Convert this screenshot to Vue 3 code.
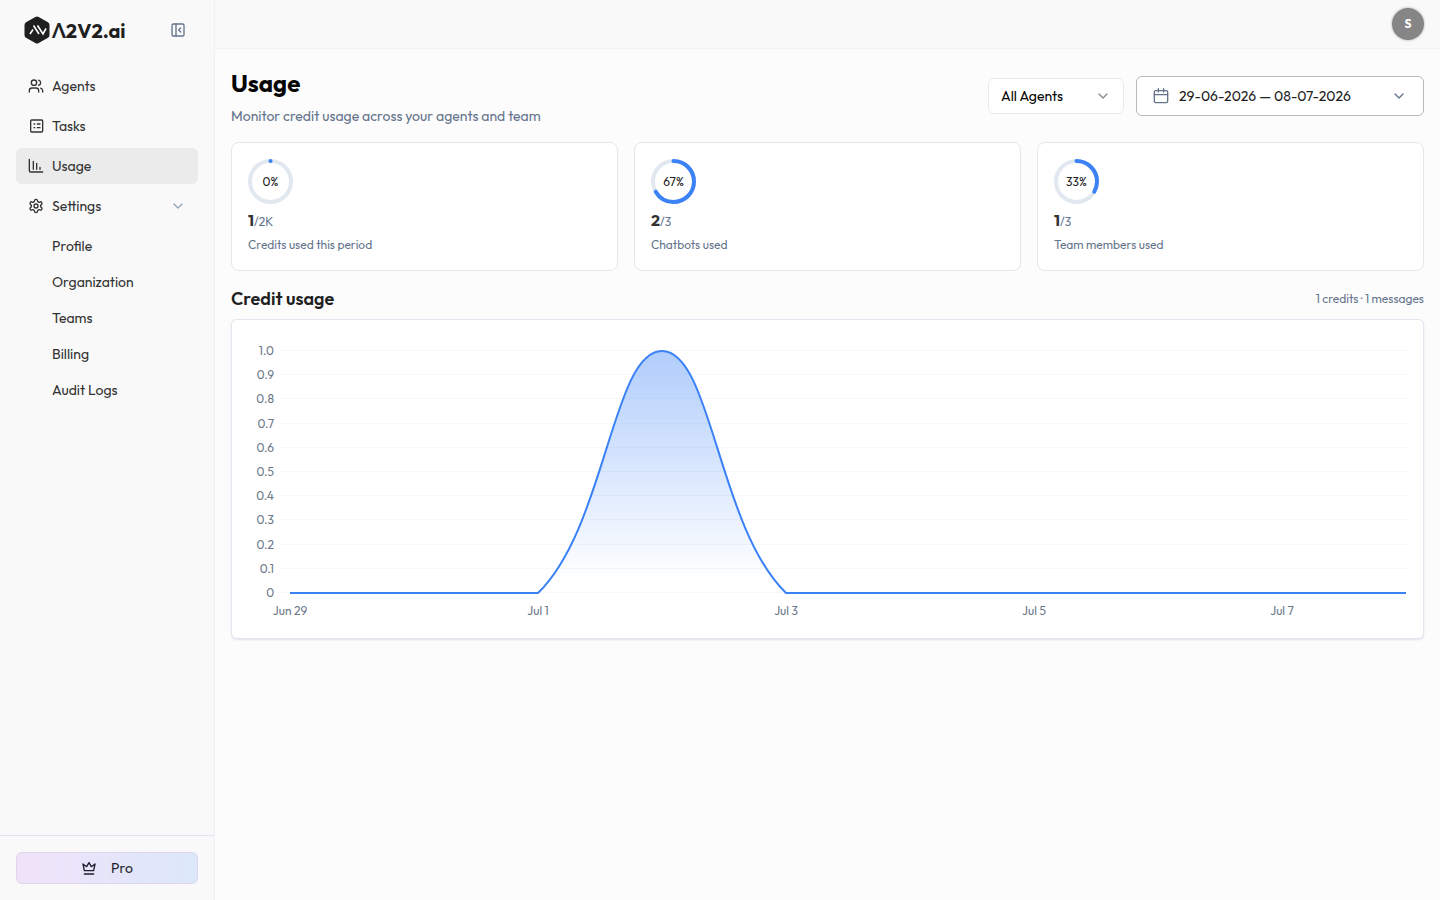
<script setup>
import { computed, onBeforeUnmount, onMounted, ref } from 'vue'

const subItems = ['Profile', 'Organization', 'Teams', 'Billing', 'Audit Logs']

const stats = [
  { percent: 0, arc: 0.05, used: '1', limit: '2K', label: 'Credits used this period' },
  { percent: 67, arc: 66.67, used: '2', limit: '3', label: 'Chatbots used' },
  { percent: 33, arc: 33.33, used: '1', limit: '3', label: 'Team members used' },
]

const values = [0, 0, 0, 1, 0, 0, 0, 0, 0, 0]
const dayLabels = ['Jun 29', '', 'Jul 1', '', 'Jul 3', '', 'Jul 5', '', 'Jul 7', '']

const chartHeight = 286
const plot = { left: 42, right: 1, top: 15, bottom: 257 }
const chartEl = ref(null)
const chartWidth = ref(1159)
let observer

onMounted(() => {
  observer = new ResizeObserver(([entry]) => {
    chartWidth.value = Math.round(entry.contentRect.width)
  })
  observer.observe(chartEl.value)
})
onBeforeUnmount(() => observer.disconnect())

const points = computed(() => {
  const step = (chartWidth.value - plot.right - plot.left) / (values.length - 1)
  return values.map((v, i) => ({
    x: plot.left + step * i,
    y: plot.bottom - v * (plot.bottom - plot.top),
  }))
})

const gridRows = computed(() =>
  Array.from({ length: 11 }, (_, i) => ({
    y: Math.round(plot.top + (i * (plot.bottom - plot.top)) / 10),
    text: i === 10 ? '0' : ((10 - i) / 10).toFixed(1),
  }))
)

/* Cardinal spline with tension 0.4, control points kept inside the plot. */
const linePath = computed(() => {
  const pts = points.value
  const tension = 0.4
  const cap = (y) => Math.min(plot.bottom, Math.max(plot.top, y))
  const controls = pts.map((p, i) => {
    const prev = pts[i - 1] || p
    const next = pts[i + 1] || p
    const before = Math.hypot(p.x - prev.x, p.y - prev.y)
    const after = Math.hypot(next.x - p.x, next.y - p.y)
    const total = before + after || 1
    const a = (tension * before) / total
    const b = (tension * after) / total
    return {
      inX: p.x - a * (next.x - prev.x),
      inY: cap(p.y - a * (next.y - prev.y)),
      outX: p.x + b * (next.x - prev.x),
      outY: cap(p.y + b * (next.y - prev.y)),
    }
  })
  return pts.reduce((d, p, i) => {
    if (i === 0) return `M${p.x} ${p.y}`
    const c = controls[i - 1]
    const e = controls[i]
    return `${d}C${c.outX} ${c.outY} ${e.inX} ${e.inY} ${p.x} ${p.y}`
  }, '')
})

const areaPath = computed(() => {
  const pts = points.value
  return `${linePath.value}L${pts[pts.length - 1].x} ${plot.bottom}L${pts[0].x} ${plot.bottom}Z`
})
</script>

<template>
  <div class="app">
    <aside class="sidebar">
      <div class="brand-row">
        <a href="#" class="brand">
          <svg class="brand-mark" viewBox="0 0 26 28" aria-hidden="true">
            <path d="M11.3 1Q13 0 14.7 1L24 6.200Q25.500 7.100 25.500 9V19Q25.500 20.900 24 21.800L14.700 27Q13 28 11.300 27L2 21.800Q.5 20.900 .5 19V9Q.5 7.100 2 6.200Z" fill="#1f1f1f" />
            <path d="M6 18L9 13.500M9.500 9.500L15 18M13.500 9.500L19 18L22 12.500" fill="none" stroke="#fff" stroke-width="1.600" />
          </svg>
          <span>Λ2V2.ai</span>
        </a>
        <button class="icon-button" aria-label="Collapse sidebar">
          <svg class="icon" viewBox="0 0 24 24"><rect x="3" y="3" width="18" height="18" rx="2" /><path d="M9 3v18M16 15l-3-3 3-3" /></svg>
        </button>
      </div>

      <nav class="nav">
        <a href="#" class="nav-item">
          <svg class="icon" viewBox="0 0 24 24"><path d="M16 21v-2a4 4 0 0 0-4-4H6a4 4 0 0 0-4 4v2" /><circle cx="9" cy="7" r="4" /><path d="M22 21v-2a4 4 0 0 0-3-3.870M16 3.130a4 4 0 0 1 0 7.750" /></svg>
          <span>Agents</span>
        </a>
        <a href="#" class="nav-item">
          <svg class="icon" viewBox="0 0 24 24"><rect x="4" y="3" width="18" height="18" rx="1.500" /><path d="M9 9h1M9 14.500h1M14 9h4M14 14.500h4" /></svg>
          <span>Tasks</span>
        </a>
        <a href="#" class="nav-item active" aria-current="page">
          <svg class="icon" viewBox="0 0 24 24"><path d="M2 2v17a2 2 0 0 0 2 2h18M8 17V5M13 17V8M18 17v-3" /></svg>
          <span>Usage</span>
        </a>
        <button class="nav-item" aria-expanded="true">
          <svg class="icon" viewBox="0 0 24 24"><path d="M12.220 2h-.44a2 2 0 0 0-2 2v.18a2 2 0 0 1-1 1.730l-.43.25a2 2 0 0 1-2 0l-.15-.08a2 2 0 0 0-2.730.730l-.22.380a2 2 0 0 0 .730 2.730l.15.1a2 2 0 0 1 1 1.720v.510a2 2 0 0 1-1 1.740l-.15.090a2 2 0 0 0-.730 2.730l.22.380a2 2 0 0 0 2.730.730l.15-.08a2 2 0 0 1 2 0l.43.25a2 2 0 0 1 1 1.730V20a2 2 0 0 0 2 2h.44a2 2 0 0 0 2-2v-.18a2 2 0 0 1 1-1.730l.43-.25a2 2 0 0 1 2 0l.15.080a2 2 0 0 0 2.730-.730l.22-.390a2 2 0 0 0-.730-2.730l-.15-.08a2 2 0 0 1-1-1.740v-.5a2 2 0 0 1 1-1.740l.15-.09a2 2 0 0 0 .730-2.730l-.22-.380a2 2 0 0 0-2.730-.730l-.15.080a2 2 0 0 1-2 0l-.43-.25a2 2 0 0 1-1-1.730V4a2 2 0 0 0-2-2z" /><circle cx="12" cy="12" r="3" /></svg>
          <span>Settings</span>
          <svg class="icon chevron" viewBox="0 0 24 24"><path d="m6 9 6 6 6-6" /></svg>
        </button>
        <div class="sub-nav">
          <a v-for="item in subItems" :key="item" href="#" class="sub-item">{{ item }}</a>
        </div>
      </nav>

      <div class="plan">
        <button class="plan-button">
          <svg class="icon" viewBox="0 0 24 24"><path d="M12 4l3.500 6L21 6l-2 10H5L3 6l5.500 4zM5 21h14" /></svg>
          <span>Pro</span>
        </button>
      </div>
    </aside>

    <div class="page">
      <header class="topbar">
        <button class="avatar" aria-label="Account">S</button>
      </header>

      <main class="content">
        <div class="heading">
          <div>
            <h1>Usage</h1>
            <p>Monitor credit usage across your agents and team</p>
          </div>
          <div class="controls">
            <div class="select-wrap">
              <select aria-label="Agent">
                <option>All Agents</option>
              </select>
              <svg class="icon select-chevron" viewBox="0 0 24 24"><path d="m6 9 6 6 6-6" /></svg>
            </div>
            <button class="date-range">
              <svg class="icon" viewBox="0 0 24 24"><rect x="2" y="4" width="20" height="18" rx="2" /><path d="M8 1v5M16 1v5M2 10h20" /></svg>
              <span>29-06-2026 — 08-07-2026</span>
              <svg class="icon chevron" viewBox="0 0 24 24"><path d="m6 9 6 6 6-6" /></svg>
            </button>
          </div>
        </div>

        <section class="stats">
          <article v-for="stat in stats" :key="stat.label" class="stat">
            <svg class="ring" viewBox="0 0 45 45">
              <circle class="ring-track" cx="22.500" cy="22.500" r="20.500" />
              <circle
                class="ring-value"
                cx="22.500"
                cy="22.500"
                r="20.500"
                pathLength="100"
                :stroke-dasharray="`${stat.arc} 100`"
                transform="rotate(-90 22.500 22.500)"
              />
              <text x="22.500" y="27" text-anchor="middle">{{ stat.percent }}%</text>
            </svg>
            <div class="stat-value"><strong>{{ stat.used }}</strong>/{{ stat.limit }}</div>
            <div class="stat-label">{{ stat.label }}</div>
          </article>
        </section>

        <section class="usage">
          <div class="usage-head">
            <h2>Credit usage</h2>
            <span>1 credits · 1 messages</span>
          </div>
          <div class="chart-card">
            <div ref="chartEl" class="chart">
              <svg :width="chartWidth" :height="chartHeight" role="img" aria-label="Credit usage by day">
                <defs>
                  <linearGradient id="area-fill" x1="0" y1="0" x2="0" y2="1">
                    <stop offset="0" stop-color="#3b82f6" stop-opacity="0.4" />
                    <stop offset="0.95" stop-color="#3b82f6" stop-opacity="0" />
                  </linearGradient>
                </defs>
                <g v-for="row in gridRows" :key="row.text">
                  <rect class="grid-line" :x="plot.left - 8" :y="row.y - 1" :width="chartWidth - plot.left + 7" height="1" />
                  <text class="tick" :x="plot.left - 16" :y="row.y + 4" text-anchor="end">{{ row.text }}</text>
                </g>
                <path :d="areaPath" fill="url(#area-fill)" />
                <path class="line" :d="linePath" />
                <template v-for="(label, i) in dayLabels" :key="i">
                  <text v-if="label" class="tick" :x="points[i].x" :y="plot.bottom + 22" text-anchor="middle">{{ label }}</text>
                </template>
              </svg>
            </div>
          </div>
        </section>
      </main>
    </div>
  </div>
</template>

<style>
body {
  background: #fcfcfd;
}
</style>

<style scoped>
.app {
  display: flex;
  min-height: 100vh;
  font-family: Outfit, Lato, "Noto Sans", sans-serif;
  font-size: 14px;
  line-height: 20px;
  color: #333;
}
.app *,
.app {
  box-sizing: border-box;
}
button,
select {
  font: inherit;
  color: inherit;
  cursor: pointer;
}
a {
  color: inherit;
  text-decoration: none;
}
h1,
h2,
p {
  margin: 0;
}
.icon {
  width: 16px;
  height: 16px;
  flex: none;
  fill: none;
  stroke: currentColor;
  stroke-width: 2;
  stroke-linecap: round;
  stroke-linejoin: round;
}
.sidebar {
  display: flex;
  flex: none;
  flex-direction: column;
  width: 215px;
  background: #f9f9f9;
  border-right: 1px solid #f0f1f5;
}
.brand-row {
  display: flex;
  align-items: center;
  justify-content: space-between;
  height: 60px;
  padding: 0 28px 0 24px;
}
.brand {
  display: flex;
  align-items: center;
  gap: 2px;
  font-size: 20px;
  font-weight: 700;
  line-height: 24px;
  color: #1f1f1f;
}
.brand-mark {
  width: 26px;
  height: 28px;
}
.brand span {
  padding-top: 2px;
}
.icon-button {
  display: flex;
  padding: 0;
  border: 0;
  background: none;
  color: #64748b;
}
.nav {
  display: flex;
  flex: 1;
  flex-direction: column;
  gap: 4px;
  padding: 8px 16px;
}
.nav-item {
  display: flex;
  align-items: center;
  gap: 8px;
  width: 100%;
  height: 36px;
  padding: 0 12px;
  border: 0;
  border-radius: 6px;
  background: none;
}
.nav-item.active {
  background: #ebebeb;
}
.chevron {
  margin-left: auto;
}
.nav-item .chevron {
  color: #94a3b8;
}
.sub-nav {
  display: flex;
  flex-direction: column;
}
.sub-item {
  padding: 8px 12px 8px 36px;
}
.plan {
  padding: 16px;
  border-top: 1px solid #e2e4ef;
}
.plan-button {
  display: flex;
  align-items: center;
  justify-content: center;
  gap: 14px;
  width: 100%;
  height: 32px;
  border: 1px solid #dfd5f1;
  border-radius: 6px;
  background: linear-gradient(90deg, #f0e2f9, #dce8fa);
  color: #1e1e2e;
}
.page {
  display: flex;
  flex: 1;
  flex-direction: column;
  min-width: 0;
  background: #fcfcfd;
}
.topbar {
  display: flex;
  align-items: center;
  justify-content: flex-end;
  height: 49px;
  padding: 0 16px;
  background: #f9f9f9;
  border-bottom: 1px solid #f2f2f4;
}
.avatar {
  width: 32px;
  height: 32px;
  padding: 0;
  border: 0;
  border-radius: 50%;
  background: #858585;
  box-shadow: 0 0 2px 1px #d4d4d4;
  color: #fff;
  font-size: 12px;
  font-weight: 700;
}
.content {
  display: flex;
  flex-direction: column;
  gap: 16px;
  padding: 16px;
}
.heading {
  display: flex;
  align-items: center;
  justify-content: space-between;
}
h1 {
  font-size: 24px;
  font-weight: 700;
  line-height: 36px;
  color: #050505;
}
.heading p {
  margin-top: 5px;
  color: #64748b;
}
.controls {
  display: flex;
  align-items: center;
  gap: 12px;
}
.select-wrap {
  position: relative;
  width: 136px;
}
select {
  display: block;
  width: 100%;
  height: 36px;
  padding: 0 12px;
  border: 1px solid #e8eaf2;
  border-radius: 6px;
  appearance: none;
  background: #fff;
  color: #050505;
}
.select-chevron {
  position: absolute;
  top: 10px;
  right: 13px;
  color: #858991;
  pointer-events: none;
}
.date-range {
  display: flex;
  align-items: center;
  gap: 10px;
  width: 288px;
  height: 40px;
  padding: 0 16px;
  border: 1px solid #b9b9b9;
  border-radius: 6px;
  background: #fff;
  color: #1f1f1f;
}
.date-range .icon {
  color: #64748b;
}
.stats {
  display: grid;
  grid-template-columns: repeat(3, 1fr);
  gap: 16px;
}
.stat {
  padding: 16px;
  border: 1px solid #e4e7ee;
  border-radius: 8px;
  background: #fff;
  color: #64748b;
}
.ring {
  display: block;
  width: 45px;
  height: 45px;
}
.ring circle {
  fill: none;
  stroke-width: 4;
}
.ring-track {
  stroke: #e2e8f0;
}
.ring-value {
  stroke: #3b82f6;
  stroke-linecap: round;
}
.ring text {
  fill: #222;
  font-size: 12px;
}
.stat-value {
  margin-top: 4px;
  font-size: 12px;
  line-height: 28px;
}
.stat-value strong {
  color: #333;
  font-size: 16px;
  font-weight: 700;
  line-height: 16px;
}
.stat-label {
  font-size: 12px;
  line-height: 18px;
}
.usage {
  display: flex;
  flex-direction: column;
  gap: 8px;
}
.usage-head {
  display: flex;
  align-items: center;
  justify-content: space-between;
  font-size: 12px;
  line-height: 24px;
  color: #64748b;
}
h2 {
  font-size: 18px;
  font-weight: 600;
  color: #1f1f1f;
}
.chart-card {
  padding: 16px;
  border: 1px solid #e4e7f0;
  border-radius: 6px;
  background: #fff;
  box-shadow: 0 1px 2px #dfe1ea;
}
.chart {
  height: 286px;
  overflow: hidden;
}
.chart svg {
  display: block;
}
.grid-line {
  fill: #f6f7f9;
}
.tick {
  fill: #6b7789;
  font-size: 12px;
}
.line {
  fill: none;
  stroke: #3b82f6;
  stroke-width: 2;
  stroke-linejoin: round;
}
</style>
